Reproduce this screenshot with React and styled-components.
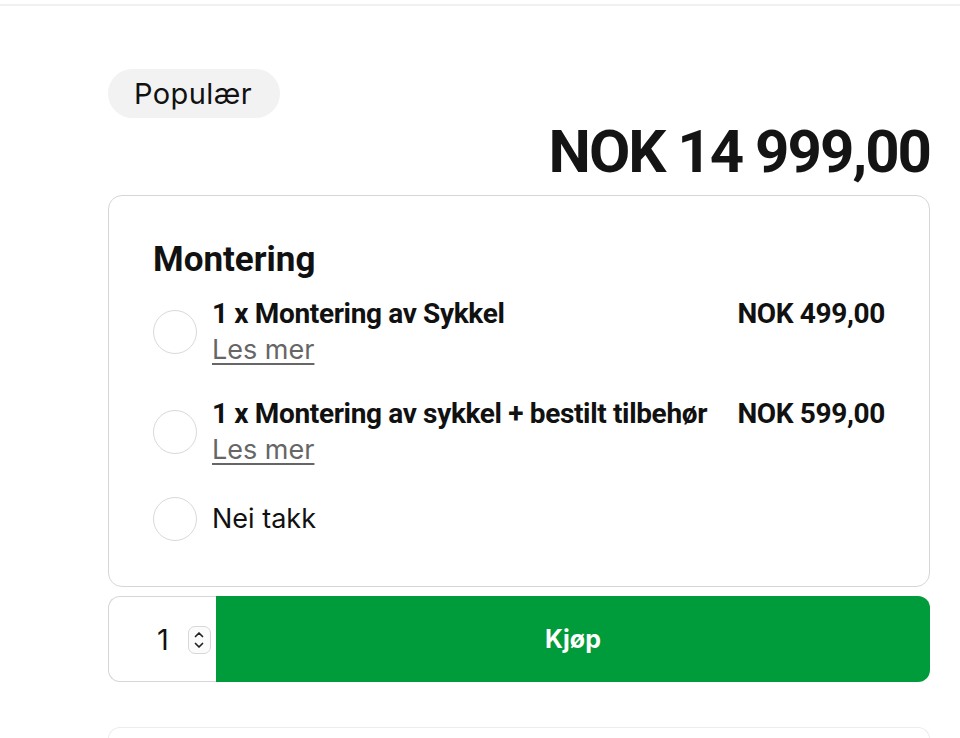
import React from "react";
import styled, { createGlobalStyle } from "styled-components";

const GlobalStyle = createGlobalStyle`
  html, body { margin: 0; padding: 0; background: #fff; }
  body { font-family: Inter, "Noto Sans", sans-serif; color: #111; -webkit-font-smoothing: antialiased; }
  * { box-sizing: border-box; }
`;

const TopRule = styled.div`
  height: 6px;
  border-bottom: 2px solid #f0f0f0;
`;

const Wrapper = styled.div`
  padding: 63px 30px 0 108px;
  display: flex;
  flex-direction: column;
`;

const Badge = styled.span`
  align-self: flex-start;
  display: inline-flex;
  align-items: center;
  height: 49px;
  padding: 0 28px 0 26px;
  border-radius: 25px;
  background: #f2f2f2;
  font-size: 29px;
  letter-spacing: 0.4px;
  color: #111;
`;

const Price = styled.div`
  text-align: right;
  font-family: Roboto, "Liberation Sans", sans-serif;
  font-weight: 700;
  font-size: 60px;
  letter-spacing: -2px;
  line-height: 68px;
  color: #141414;
`;

const Card = styled.section`
  margin-top: 9px;
  border: 1px solid #d6d6d6;
  border-radius: 14px;
  padding: 43px 44px 45px 44px;
`;

const Heading = styled.h2`
  margin: 0 0 16px;
  font-family: Roboto, "Liberation Sans", sans-serif;
  font-weight: 700;
  font-size: 35px;
  line-height: 42px;
  color: #111;
`;

const Options = styled.div`
  display: flex;
  flex-direction: column;
  gap: 30px;
`;

const Option = styled.label`
  display: flex;
  align-items: center;
  gap: 15px;
  cursor: pointer;
`;

const Radio = styled.span`
  flex: none;
  width: 44px;
  height: 44px;
  border-radius: 50%;
  border: 1.5px solid #d9d9d9;
  background: #fff;
`;

const OptionBody = styled.div`
  flex: 1;
  display: flex;
  flex-direction: column;
`;

const OptionHead = styled.div`
  display: flex;
  justify-content: space-between;
  gap: 12px;
  font-family: Roboto, "Liberation Sans", sans-serif;
  font-weight: 700;
  font-size: 28px;
  letter-spacing: -0.35px;
  line-height: 34px;
  color: #111;
`;

const OptionLabel = styled.span`
  white-space: nowrap;
`;

const OptionPrice = styled.span`
  white-space: nowrap;
`;

const ReadMore = styled.a`
  align-self: flex-start;
  margin-top: 2px;
  font-size: 27px;
  line-height: 34px;
  color: #666;
  text-decoration: underline;
  text-decoration-thickness: 2px;
  text-underline-offset: 4px;
`;

const PlainLabel = styled.span`
  font-size: 27px;
  line-height: 34px;
  color: #111;
`;

const BuyRow = styled.div`
  margin-top: 9px;
  display: flex;
  height: 86px;
`;

const QtyBox = styled.div`
  width: 108px;
  flex: none;
  display: flex;
  align-items: center;
  padding-left: 48px;
  gap: 19px;
  border: 1px solid #d6d6d6;
  border-right: none;
  border-radius: 12px 0 0 12px;
`;

const QtyValue = styled.span`
  font-size: 29px;
  color: #111;
`;

const Spinner = styled.span`
  width: 23px;
  height: 28px;
  margin-top: 2px;
  border: 1px solid #d8d8d8;
  border-radius: 7px;
  display: flex;
  flex-direction: column;
  align-items: center;
  justify-content: center;
  gap: 2px;
  background: #fbfbfb;
`;

const BuyButton = styled.button`
  flex: 1;
  border: none;
  background: #009b3a;
  border-radius: 0 12px 12px 0;
  color: #fff;
  font-family: Inter, "Liberation Sans", sans-serif;
  font-weight: 700;
  font-size: 25px;
  cursor: pointer;
`;

const NextCard = styled.div`
  margin-top: 45px;
  height: 80px;
  border: 1px solid #ececec;
  border-bottom: none;
  border-radius: 12px 12px 0 0;
`;

const Chevron = ({ up }) => (
  <svg width="12" height="9" viewBox="0 0 12 9">
    <path
      d={up ? "M2.5 6.5 L6 3 L9.5 6.5" : "M2.5 2.5 L6 6 L9.5 2.5"}
      fill="none"
      stroke="#222"
      strokeWidth="1.7"
      strokeLinecap="round"
      strokeLinejoin="round"
    />
  </svg>
);

const options = [
  { label: "1 x Montering av Sykkel", price: "NOK 499,00" },
  { label: "1 x Montering av sykkel + bestilt tilbehør", price: "NOK 599,00" },
];

export default function App() {
  return (
    <>
      <GlobalStyle />
      <TopRule />
      <Wrapper>
        <Badge>Populær</Badge>
        <Price>NOK 14 999,00</Price>
        <Card>
          <Heading>Montering</Heading>
          <Options>
            {options.map((o) => (
              <Option key={o.label}>
                <Radio />
                <OptionBody>
                  <OptionHead>
                    <OptionLabel>{o.label}</OptionLabel>
                    <OptionPrice>{o.price}</OptionPrice>
                  </OptionHead>
                  <ReadMore href="#">Les mer</ReadMore>
                </OptionBody>
              </Option>
            ))}
            <Option>
              <Radio />
              <PlainLabel>Nei takk</PlainLabel>
            </Option>
          </Options>
        </Card>
        <BuyRow>
          <QtyBox>
            <QtyValue>1</QtyValue>
            <Spinner>
              <Chevron up />
              <Chevron />
            </Spinner>
          </QtyBox>
          <BuyButton>Kjøp</BuyButton>
        </BuyRow>
        <NextCard />
      </Wrapper>
    </>
  );
}
